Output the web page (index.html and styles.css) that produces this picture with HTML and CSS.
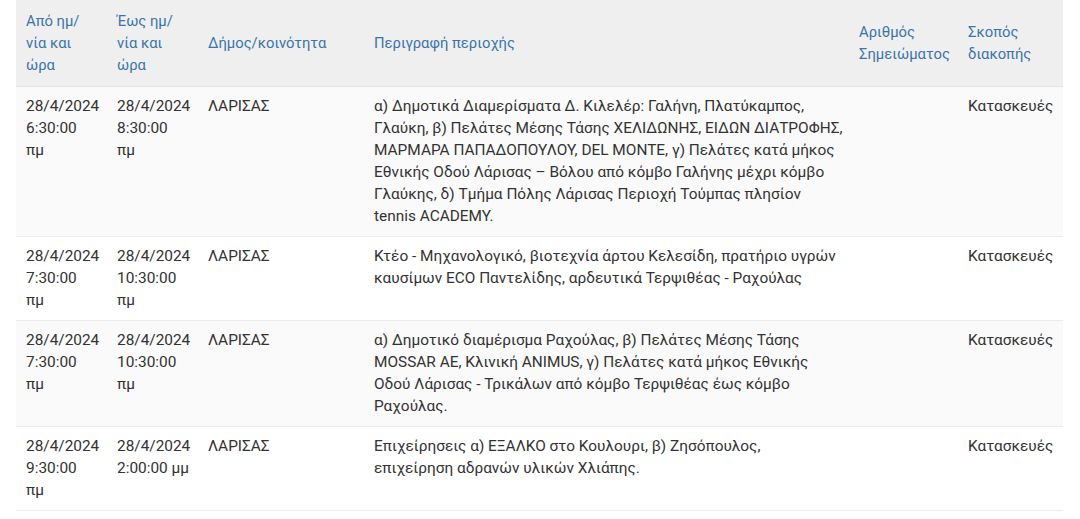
FILE: index.html
```html
<!DOCTYPE html>
<html lang="el">
<head>
<meta charset="utf-8">
<title>Διακοπές ρεύματος</title>
<link rel="stylesheet" href="styles.css">
</head>
<body>
<div class="wrap">
<table class="outages">
<colgroup>
<col class="c-from"><col class="c-to"><col class="c-mun"><col class="c-desc"><col class="c-num"><col class="c-why">
</colgroup>
<thead>
<tr>
<th>Από ημ/<br>νία και<br>ώρα</th>
<th>Έως ημ/<br>νία και<br>ώρα</th>
<th>Δήμος/κοινότητα</th>
<th>Περιγραφή περιοχής</th>
<th>Αριθμός Σημειώματος</th>
<th>Σκοπός διακοπής</th>
</tr>
</thead>
<tbody>
<tr class="odd">
<td>28/4/2024 6:30:00 πμ</td>
<td>28/4/2024 8:30:00 πμ</td>
<td>ΛΑΡΙΣΑΣ</td>
<td class="desc">α) Δημοτικά Διαμερίσματα Δ. Κιλελέρ: Γαλήνη, Πλατύκαμπος, Γλαύκη, β) Πελάτες Μέσης Τάσης ΧΕΛΙΔΩΝΗΣ, ΕΙΔΩΝ ΔΙΑΤΡΟΦΗΣ, ΜΑΡΜΑΡΑ ΠΑΠΑΔΟΠΟΥΛΟΥ, DEL MONTE, γ) Πελάτες κατά μήκος Εθνικής Οδού Λάρισας – Βόλου από κόμβο Γαλήνης μέχρι κόμβο Γλαύκης, δ) Τμήμα Πόλης Λάρισας Περιοχή Τούμπας πλησίον tennis ACADEMY.</td>
<td></td>
<td>Κατασκευές</td>
</tr>
<tr>
<td>28/4/2024 7:30:00 πμ</td>
<td>28/4/2024 10:30:00 πμ</td>
<td>ΛΑΡΙΣΑΣ</td>
<td class="desc">Κτέο - Μηχανολογικό, βιοτεχνία άρτου Κελεσίδη, πρατήριο υγρών καυσίμων ECO Παντελίδης, αρδευτικά Τερψιθέας - Ραχούλας</td>
<td></td>
<td>Κατασκευές</td>
</tr>
<tr class="odd">
<td>28/4/2024 7:30:00 πμ</td>
<td>28/4/2024 10:30:00 πμ</td>
<td>ΛΑΡΙΣΑΣ</td>
<td class="desc">α) Δημοτικό διαμέρισμα Ραχούλας, β) Πελάτες Μέσης Τάσης MOSSAR AE, Κλινική ANIMUS, γ) Πελάτες κατά μήκος Εθνικής Οδού Λάρισας - Τρικάλων από κόμβο Τερψιθέας έως κόμβο Ραχούλας.</td>
<td></td>
<td>Κατασκευές</td>
</tr>
<tr>
<td>28/4/2024 9:30:00 πμ</td>
<td>28/4/2024 2:00:00 μμ</td>
<td>ΛΑΡΙΣΑΣ</td>
<td class="desc">Επιχείρησεις α) ΕΞΑΛΚΟ στο Κουλουρι, β) Ζησόπουλος,<br>επιχείρηση αδρανών υλικών Χλιάπης.</td>
<td></td>
<td>Κατασκευές</td>
</tr>
</tbody>
</table>
</div>
</body>
</html>
```
FILE: styles.css
```css
html, body {
  margin: 0;
  padding: 0;
  background: #ffffff;
}
body {
  font-family: Roboto, "Noto Sans", sans-serif;
  font-size: 15.4px;
  line-height: 22px;
  color: #333333;
}
.wrap {
  padding: 0 17px 0 16px;
}
.outages {
  width: 100%;
  border-collapse: collapse;
  table-layout: fixed;
}
.c-from { width: 91px; }
.c-to { width: 91px; }
.c-mun { width: 166px; }
.c-desc { width: 485px; }
.c-num { width: 109px; }
.c-why { width: auto; }
.outages th {
  background: #efefef;
  color: #3b74a8;
  font-size: 14.8px;
  font-weight: 400;
  text-align: left;
  vertical-align: middle;
  padding: 10px 8px 10px 10px;
  border-bottom: 1px solid #e4e4e4;
}
.outages td {
  vertical-align: top;
  padding: 8px 9px 9px 10px;
  border-top: 1px solid #ececec;
}
.outages td.desc {
  padding-right: 3px;
}
.outages tr.odd td {
  background: #fafafa;
}
.outages tbody tr:last-child td {
  border-bottom: 1px solid #ececec;
}
```
